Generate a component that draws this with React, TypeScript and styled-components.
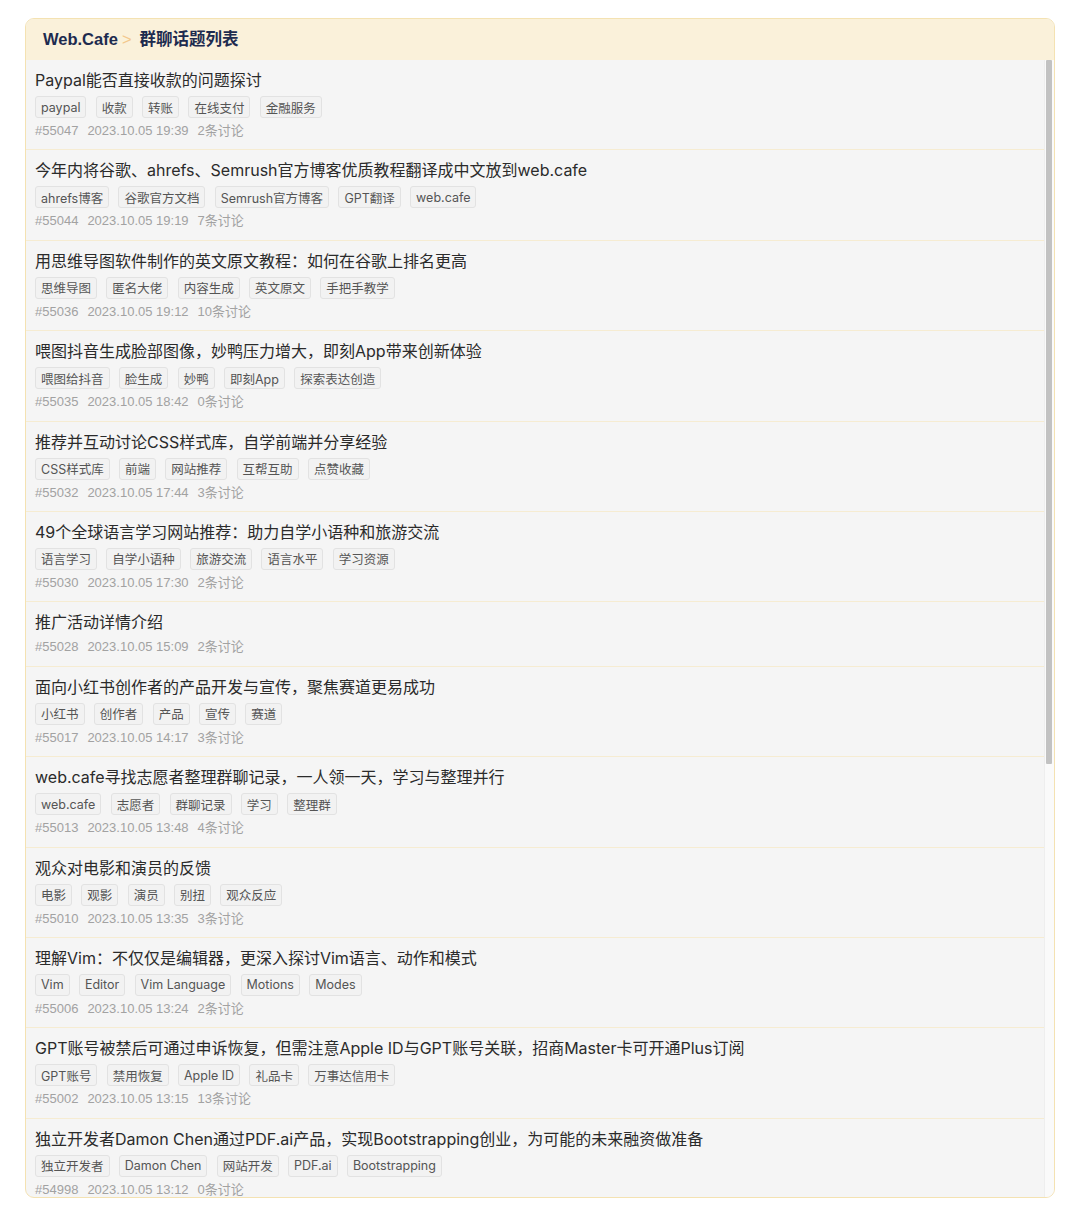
import React from 'react'
import styled, { createGlobalStyle } from 'styled-components'

const GlobalStyle = createGlobalStyle`
  html, body {
    margin: 0;
    padding: 0;
    background: #ffffff;
  }
  body {
    font-family: "Liberation Sans", "Noto Sans CJK SC", sans-serif;
    -webkit-font-smoothing: antialiased;
  }
`

const Colors = {
  navy: '#1d2b4f',
  arrow: '#f3c88c',
  headerBg: '#faf1da',
  border: '#f4e2b2',
  listBg: '#f5f5f5',
  divider: '#f6ecd2',
  title: '#2b2b2b',
  tag: '#555555',
  tagBorder: '#e2e2e2',
  tagBg: '#f2f2f2',
  meta: '#a2a2a2',
  track: '#fafafa',
  thumb: '#c2c2c2',
}

const textFont = `Inter, "Noto Sans CJK SC", sans-serif`

const Panel = styled.section`
  margin: 18px 25px;
  height: 1180px;
  box-sizing: border-box;
  border: 1px solid ${Colors.border};
  border-radius: 9px;
  overflow: hidden;
  display: flex;
  flex-direction: column;
  background: ${Colors.listBg};
`

const Header = styled.header`
  flex: none;
  height: 41px;
  line-height: 41px;
  padding: 0 17px;
  background: ${Colors.headerBg};
  font-size: 16.5px;
  font-weight: 700;
  color: ${Colors.navy};
  white-space: nowrap;
`

const Crumb = styled.span`
  color: ${Colors.arrow};
  font-weight: 400;
  margin: 0 8px 0 4px;
`

const Body = styled.div`
  flex: 1;
  min-height: 0;
  display: flex;
`

const List = styled.ul`
  flex: 1;
  min-width: 0;
  margin: 0;
  padding: 0;
  list-style: none;
  overflow: hidden;
`

const Track = styled.div`
  flex: none;
  width: 8px;
  padding-left: 1px;
  background: ${Colors.track};
  border-left: 1px solid #eeeeee;
`

const Thumb = styled.div`
  width: 6px;
  height: 704px;
  background: ${Colors.thumb};
  border-radius: 1px;
`

const Item = styled.li`
  padding: 8px 9px 9.4px;
  border-bottom: 1px solid ${Colors.divider};
`

const Title = styled.div`
  font-family: ${textFont};
  font-size: 16px;
  line-height: 24px;
  color: ${Colors.title};
  white-space: nowrap;
`

const Tags = styled.div`
  display: flex;
  gap: 9.3px;
  margin-top: 4px;
`

const Tag = styled.span`
  box-sizing: border-box;
  height: 22px;
  padding: 0 5px;
  display: inline-flex;
  align-items: center;
  font-family: ${textFont};
  font-size: 12.5px;
  color: ${Colors.tag};
  background: ${Colors.tagBg};
  border: 1px solid ${Colors.tagBorder};
  border-radius: 3px;
  white-space: nowrap;
`

const Meta = styled.div`
  display: flex;
  gap: 9px;
  margin-top: 4px;
  font-size: 13px;
  line-height: 18px;
  color: ${Colors.meta};
`

type Topic = {
  id: number
  title: string
  tags: string[]
  time: string
  replies: number
}

const topics: Topic[] = [
  { id: 55047, title: 'Paypal能否直接收款的问题探讨', tags: ['paypal', '收款', '转账', '在线支付', '金融服务'], time: '2023.10.05 19:39', replies: 2 },
  { id: 55044, title: '今年内将谷歌、ahrefs、Semrush官方博客优质教程翻译成中文放到web.cafe', tags: ['ahrefs博客', '谷歌官方文档', 'Semrush官方博客', 'GPT翻译', 'web.cafe'], time: '2023.10.05 19:19', replies: 7 },
  { id: 55036, title: '用思维导图软件制作的英文原文教程：如何在谷歌上排名更高', tags: ['思维导图', '匿名大佬', '内容生成', '英文原文', '手把手教学'], time: '2023.10.05 19:12', replies: 10 },
  { id: 55035, title: '喂图抖音生成脸部图像，妙鸭压力增大，即刻App带来创新体验', tags: ['喂图给抖音', '脸生成', '妙鸭', '即刻App', '探索表达创造'], time: '2023.10.05 18:42', replies: 0 },
  { id: 55032, title: '推荐并互动讨论CSS样式库，自学前端并分享经验', tags: ['CSS样式库', '前端', '网站推荐', '互帮互助', '点赞收藏'], time: '2023.10.05 17:44', replies: 3 },
  { id: 55030, title: '49个全球语言学习网站推荐：助力自学小语种和旅游交流', tags: ['语言学习', '自学小语种', '旅游交流', '语言水平', '学习资源'], time: '2023.10.05 17:30', replies: 2 },
  { id: 55028, title: '推广活动详情介绍', tags: [], time: '2023.10.05 15:09', replies: 2 },
  { id: 55017, title: '面向小红书创作者的产品开发与宣传，聚焦赛道更易成功', tags: ['小红书', '创作者', '产品', '宣传', '赛道'], time: '2023.10.05 14:17', replies: 3 },
  { id: 55013, title: 'web.cafe寻找志愿者整理群聊记录，一人领一天，学习与整理并行', tags: ['web.cafe', '志愿者', '群聊记录', '学习', '整理群'], time: '2023.10.05 13:48', replies: 4 },
  { id: 55010, title: '观众对电影和演员的反馈', tags: ['电影', '观影', '演员', '别扭', '观众反应'], time: '2023.10.05 13:35', replies: 3 },
  { id: 55006, title: '理解Vim：不仅仅是编辑器，更深入探讨Vim语言、动作和模式', tags: ['Vim', 'Editor', 'Vim Language', 'Motions', 'Modes'], time: '2023.10.05 13:24', replies: 2 },
  { id: 55002, title: 'GPT账号被禁后可通过申诉恢复，但需注意Apple ID与GPT账号关联，招商Master卡可开通Plus订阅', tags: ['GPT账号', '禁用恢复', 'Apple ID', '礼品卡', '万事达信用卡'], time: '2023.10.05 13:15', replies: 13 },
  { id: 54998, title: '独立开发者Damon Chen通过PDF.ai产品，实现Bootstrapping创业，为可能的未来融资做准备', tags: ['独立开发者', 'Damon Chen', '网站开发', 'PDF.ai', 'Bootstrapping'], time: '2023.10.05 13:12', replies: 0 },
]

const TopicRow: React.FC<{ topic: Topic }> = ({ topic }) => (
  <Item>
    <Title>{topic.title}</Title>
    {topic.tags.length > 0 && (
      <Tags>
        {topic.tags.map((t) => (
          <Tag key={t}>{t}</Tag>
        ))}
      </Tags>
    )}
    <Meta>
      <span>#{topic.id}</span>
      <span>{topic.time}</span>
      <span>{topic.replies}条讨论</span>
    </Meta>
  </Item>
)

export default function App() {
  return (
    <>
      <GlobalStyle />
      <Panel>
        <Header>
          Web.Cafe<Crumb>&gt;</Crumb>群聊话题列表
        </Header>
        <Body>
          <List>
            {topics.map((t) => (
              <TopicRow key={t.id} topic={t} />
            ))}
          </List>
          <Track>
            <Thumb />
          </Track>
        </Body>
      </Panel>
    </>
  )
}
